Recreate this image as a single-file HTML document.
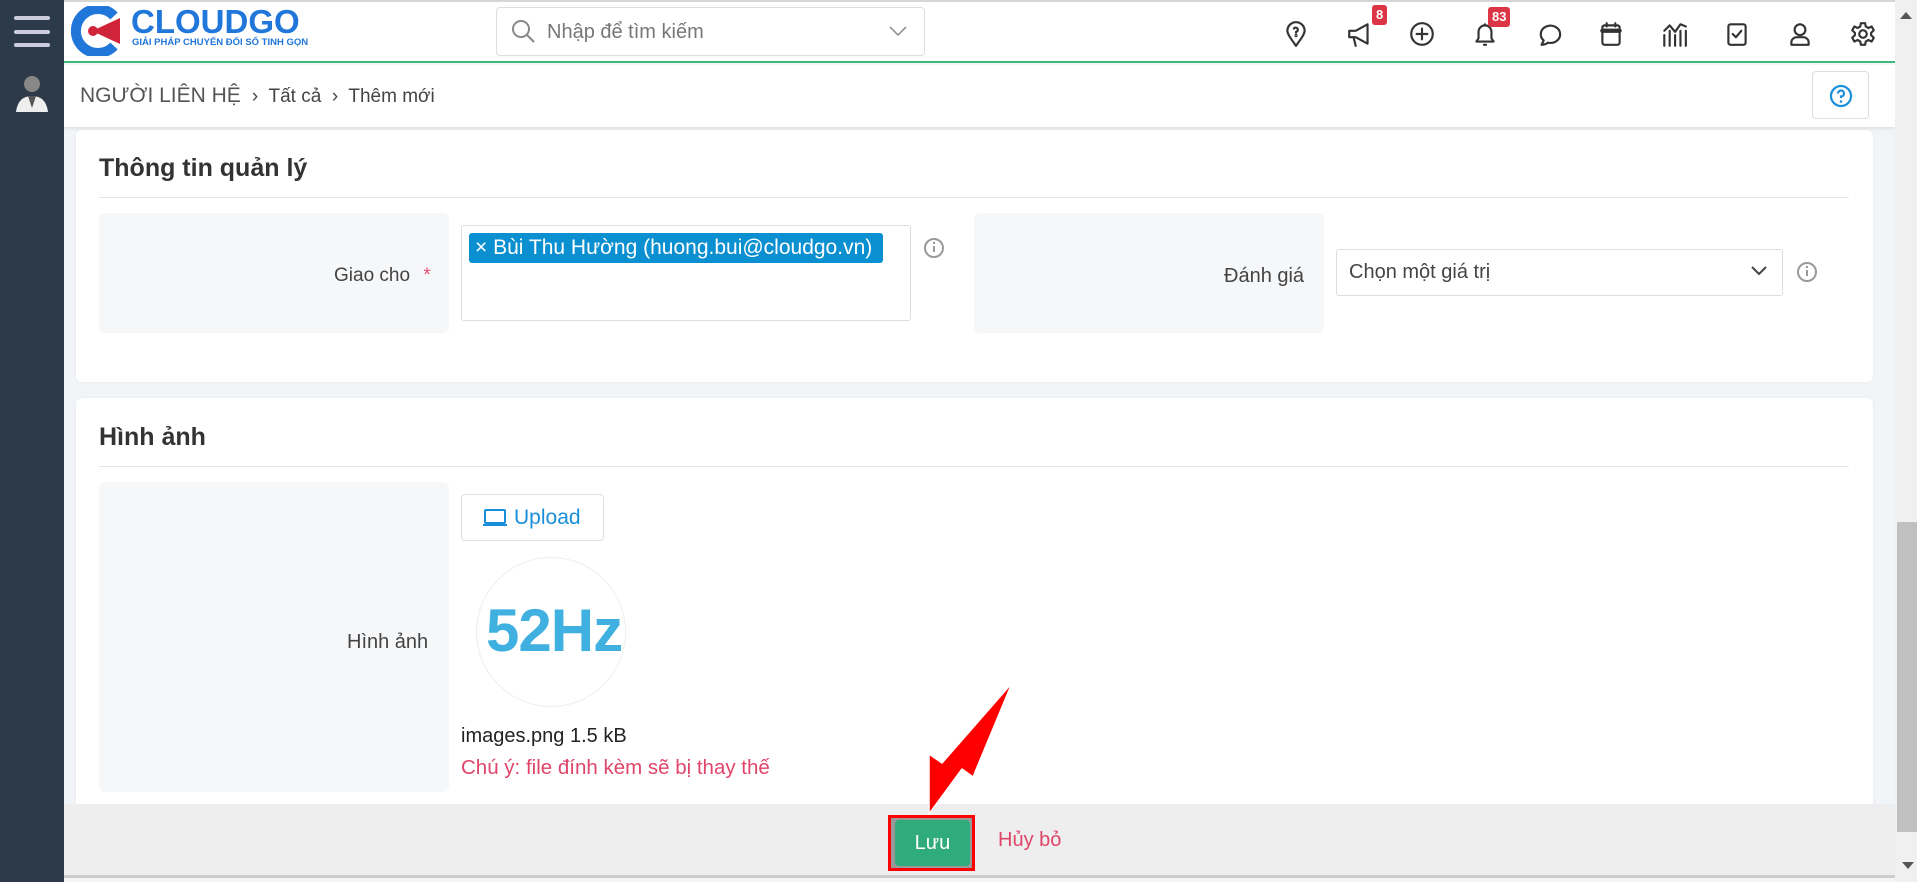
<!DOCTYPE html>
<html><head><meta charset="utf-8"><style>
*{box-sizing:border-box;margin:0;padding:0}
body{width:1917px;height:882px;overflow:hidden;position:relative;background:#f2f5f8;font-family:"Liberation Sans",sans-serif;color:#333}
.a{position:absolute}
.side{left:0;top:0;width:64px;height:882px;background:#2c3a4a}
.hdr{left:64px;top:0;width:1831px;height:63px;background:#fff;border-top:2px solid #d6d6d6;border-bottom:2px solid #3cb878}
.bc{left:64px;top:65px;width:1831px;height:62px;background:#fff;box-shadow:0 2px 3px rgba(0,0,0,.08)}
.card{background:#fff;border-radius:6px;box-shadow:0 0 3px rgba(0,0,0,.06)}
.lbl{background:#f6f7f9;border-radius:6px}
.title{font-size:25px;font-weight:bold;color:#333}
.hr{height:1px;background:#e6e6e6}
.ic svg{width:28px;height:28px;fill:none;stroke:#333;stroke-width:2;stroke-linecap:round;stroke-linejoin:round}
.badge{background:#dc3545;color:#fff;font-size:13px;font-weight:bold;border-radius:3px;padding:2px 4px;line-height:16px}
</style></head><body>
<div class="a side"></div>
<div class="a" style="left:14px;top:16px;width:36px;height:4px;background:#ccd;border-radius:2px"></div>
<div class="a" style="left:14px;top:30px;width:36px;height:4px;background:#ccd;border-radius:2px"></div>
<div class="a" style="left:14px;top:43px;width:36px;height:4px;background:#ccd;border-radius:2px"></div>
<svg class="a" style="left:12px;top:72px" width="40" height="42" viewBox="0 0 40 42"><circle cx="20" cy="12" r="8" fill="#888"/><path d="M4 40 Q6 24 20 24 Q34 24 36 40Z" fill="#eee"/><path d="M16 24 L20 36 L24 24Z" fill="#555"/></svg>

<div class="a hdr"></div>
<svg class="a" style="left:70px;top:6px" width="60" height="50" viewBox="0 0 60 50"><path d="M44 10 A22 22 0 1 0 44 40" stroke="#2176d9" stroke-width="10" fill="none"/><path d="M22 25 L50 12 L50 38Z" fill="#d0243a"/><circle cx="23" cy="25" r="5" fill="#d0243a"/></svg>
<div class="a" style="left:131px;top:3px;font-size:33px;font-weight:bold;color:#2176d9">CLOUDGO</div>
<div class="a" style="left:132px;top:37px;font-size:9.5px;font-weight:bold;color:#2176d9">GIẢI PHÁP CHUYỂN ĐỔI SỐ TINH GỌN</div>
<div class="a" style="left:496px;top:7px;width:429px;height:49px;border:1px solid #ddd;border-radius:4px;background:#fff"></div>
<svg class="a" style="left:510px;top:18px" width="26" height="26" viewBox="0 0 26 26"><circle cx="11" cy="11" r="8" stroke="#888" stroke-width="2" fill="none"/><path d="M17 17 L24 24" stroke="#888" stroke-width="2"/></svg>
<div class="a" style="left:547px;top:21px;font-size:20px;color:#777">Nhập để tìm kiếm</div>
<svg class="a" style="left:888px;top:24px" width="20" height="14"><path d="M2 3 L10 11 L18 3" stroke="#888" stroke-width="1.5" fill="none"/></svg>

<div class="a ic" style="left:1282px;top:20px"><svg viewBox="0 0 26 26"><path d="M13 24 C8 17 5 13 5 10 A8 8 0 0 1 21 10 C21 13 18 17 13 24Z"/><path d="M11 8 A2 2 0 1 1 13 11 V12"/><circle cx="13" cy="14.5" r=".5"/></svg></div>
<div class="a ic" style="left:1346px;top:20px"><svg viewBox="0 0 26 26"><path d="M3 10 H9 L20 4 V22 L9 16 H3Z"/><path d="M7 16 L9 24"/></svg></div>
<div class="a badge" style="left:1372px;top:5px">8</div>
<div class="a ic" style="left:1408px;top:20px"><svg viewBox="0 0 26 26"><circle cx="13" cy="13" r="10"/><path d="M13 8 V18 M8 13 H18"/></svg></div>
<div class="a ic" style="left:1471px;top:20px"><svg viewBox="0 0 26 26"><path d="M5 20 H21 L19 17 V11 A6 6 0 0 0 7 11 V17Z"/><path d="M13 4 V5 M12 23 H14"/></svg></div>
<div class="a badge" style="left:1488px;top:7px">83</div>
<div class="a ic" style="left:1534px;top:20px"><svg viewBox="0 0 26 26"><path d="M7 23 L9 19 A9 8 0 1 1 13 21 A9 8 0 0 1 7 23Z"/></svg></div>
<div class="a ic" style="left:1597px;top:20px"><svg viewBox="0 0 26 26"><rect x="5" y="5" width="16" height="18" rx="2"/><path d="M5 10 H21" stroke-width="4"/><path d="M9 3 V6 M17 3 V6"/></svg></div>
<div class="a ic" style="left:1660px;top:20px"><svg viewBox="0 0 26 26"><path d="M4 24 V14 M9 24 V10 M14 24 V14 M19 24 V10 M24 24 V10 M4 10 L9 5 L14 11 L19 4 L24 6"/></svg></div>
<div class="a ic" style="left:1723px;top:20px"><svg viewBox="0 0 26 26"><rect x="5" y="4" width="16" height="19" rx="2"/><path d="M9 13 L12 16 L17 10"/></svg></div>
<div class="a ic" style="left:1786px;top:20px"><svg viewBox="0 0 26 26"><circle cx="13" cy="9" r="5"/><path d="M5 23 V20 A5 5 0 0 1 10 16 H16 A5 5 0 0 1 21 20 V23Z"/></svg></div>
<div class="a ic" style="left:1849px;top:20px"><svg viewBox="0 0 26 26"><circle cx="13" cy="13" r="3.5"/><path d="M11 3 H15 L15.5 6 L18 7.5 L21 6 L23 9.5 L20.5 12 V14 L23 16.5 L21 20 L18 18.5 L15.5 20 L15 23 H11 L10.5 20 L8 18.5 L5 20 L3 16.5 L5.5 14 V12 L3 9.5 L5 6 L8 7.5 L10.5 6Z"/></svg></div>

<div class="a bc"></div>
<div class="a" style="left:80px;top:84px;font-size:21px;color:#555;white-space:nowrap">NGƯỜI LIÊN HỆ <span style="font-size:19px;color:#444">&nbsp;›&nbsp; Tất cả &nbsp;›&nbsp; Thêm mới</span></div>
<div class="a" style="left:1812px;top:71px;width:57px;height:48px;border:1px solid #ddd;border-radius:4px;background:#fff"></div>
<svg class="a" style="left:1828px;top:83px" width="26" height="26" viewBox="0 0 26 26"><circle cx="13" cy="13" r="10" stroke="#1a8fd9" stroke-width="2.2" fill="none"/><path d="M10 10.5 A3 3 0 1 1 13 13.5 V15" stroke="#1a8fd9" stroke-width="2.2" fill="none"/><circle cx="13" cy="18.5" r="1.3" fill="#1a8fd9"/></svg>

<div class="a card" style="left:76px;top:130px;width:1797px;height:252px"></div>
<div class="a title" style="left:99px;top:154px">Thông tin quản lý</div>
<div class="a hr" style="left:99px;top:197px;width:1750px"></div>
<div class="a lbl" style="left:99px;top:213px;width:350px;height:120px"></div>
<div class="a" style="left:334px;top:265px;font-size:19px;color:#444">Giao cho <span style="color:#e05070;margin-left:8px">*</span></div>
<div class="a" style="left:461px;top:225px;width:450px;height:96px;border:1px solid #ddd;border-radius:3px;background:#fff"></div>
<div class="a" style="left:469px;top:233px;width:414px;height:30px;background:#0a8fd0;border-radius:3px;color:#fff;font-size:21px;padding:3px 6px;white-space:nowrap">× Bùi Thu Hường (huong.bui@cloudgo.vn)</div>
<svg class="a" style="left:923px;top:237px" width="22" height="22"><circle cx="11" cy="11" r="9" stroke="#999" stroke-width="2" fill="none"/><path d="M11 9 V15" stroke="#999" stroke-width="2"/><circle cx="11" cy="6" r="1.2" fill="#999"/></svg>
<div class="a lbl" style="left:974px;top:213px;width:350px;height:120px"></div>
<div class="a" style="left:1224px;top:265px;font-size:20px;color:#444">Đánh giá</div>
<div class="a" style="left:1336px;top:249px;width:447px;height:47px;border:1px solid #ddd;border-radius:3px;background:#fff"></div>
<div class="a" style="left:1349px;top:261px;font-size:20px;color:#444">Chọn một giá trị</div>
<svg class="a" style="left:1750px;top:265px" width="18" height="12"><path d="M2 2 L9 9 L16 2" stroke="#444" stroke-width="2" fill="none"/></svg>
<svg class="a" style="left:1796px;top:261px" width="22" height="22"><circle cx="11" cy="11" r="9" stroke="#999" stroke-width="2" fill="none"/><path d="M11 9 V15" stroke="#999" stroke-width="2"/><circle cx="11" cy="6" r="1.2" fill="#999"/></svg>

<div class="a card" style="left:76px;top:398px;width:1797px;height:420px"></div>
<div class="a title" style="left:99px;top:423px">Hình ảnh</div>
<div class="a hr" style="left:99px;top:466px;width:1750px"></div>
<div class="a lbl" style="left:99px;top:482px;width:350px;height:310px"></div>
<div class="a" style="left:347px;top:631px;font-size:20px;color:#444">Hình ảnh</div>
<div class="a" style="left:461px;top:494px;width:143px;height:47px;border:1px solid #ddd;border-radius:4px;background:#fff"></div>
<svg class="a" style="left:482px;top:507px" width="26" height="22" viewBox="0 0 26 22"><rect x="3" y="3" width="20" height="13" rx="1" stroke="#1a8fd9" stroke-width="2" fill="none"/><path d="M1 18 H25" stroke="#1a8fd9" stroke-width="2"/></svg>
<div class="a" style="left:514px;top:506px;font-size:21px;color:#1a8fd9">Upload</div>
<div class="a" style="left:476px;top:557px;width:150px;height:150px;border:1px solid #eee;border-radius:50%"></div>
<div class="a" style="left:486px;top:596px;font-size:60px;font-weight:bold;color:#3fb0e0;letter-spacing:-1px">52Hz</div>
<div class="a" style="left:461px;top:725px;font-size:20px;color:#222">images.png 1.5 kB</div>
<div class="a" style="left:461px;top:756px;font-size:20.5px;color:#e0456a">Chú ý: file đính kèm sẽ bị thay thế</div>

<div class="a" style="left:64px;top:804px;width:1831px;height:74px;background:#eee;border-bottom:3px solid #ccc"></div>
<div class="a" style="left:888px;top:815px;width:87px;height:56px;border:3px solid #f00;background:#999"></div>
<div class="a" style="left:895px;top:820px;width:75px;height:46px;background:#30ab7c;border-radius:4px;color:#fff;font-size:20px;text-align:center;line-height:46px">Lưu</div>
<div class="a" style="left:998px;top:829px;font-size:20px;color:#e0456a">Hủy bỏ</div>
<svg class="a" style="left:915px;top:680px" width="105" height="140" viewBox="0 0 105 140"><path d="M97 3 L58 97 L47 89 L14 134 L14 74 L27 83 Z" fill="#f00" stroke="#fff" stroke-width="1.5" stroke-linejoin="round"/></svg>

<div class="a" style="left:1895px;top:0;width:22px;height:882px;background:#f0f0f0"></div>
<div class="a" style="left:1897px;top:522px;width:20px;height:310px;background:#c0c0c0"></div>
<div class="a" style="left:1900px;top:12px;width:0;height:0;border-left:6px solid transparent;border-right:6px solid transparent;border-bottom:7px solid #555"></div>
<div class="a" style="left:1902px;top:862px;width:0;height:0;border-left:6px solid transparent;border-right:6px solid transparent;border-top:7px solid #555"></div>
</body></html>
